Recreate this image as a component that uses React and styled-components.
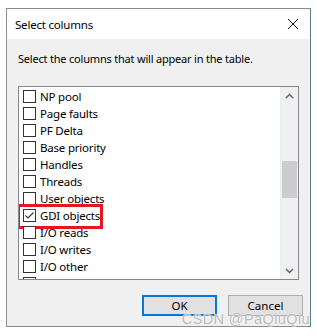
import React from "react";
import styled, { createGlobalStyle } from "styled-components";

const columns = [
  { label: "NP pool" },
  { label: "Page faults" },
  { label: "PF Delta" },
  { label: "Base priority" },
  { label: "Handles" },
  { label: "Threads" },
  { label: "User objects" },
  { label: "GDI objects", checked: true, marked: true },
  { label: "I/O reads" },
  { label: "I/O writes" },
  { label: "I/O other" },
  { label: "I/O read bytes" },
];

const App = () => {
  return (
    <Page>
      <GlobalStyle />
      <Window>
        <TitleBar>
          <Title>Select columns</Title>
          <CloseButton>
            <svg width="12" height="12" viewBox="0 0 12 12">
              <path d="M1 1L11 11M11 1L1 11" stroke="#111" strokeWidth="1" />
            </svg>
          </CloseButton>
        </TitleBar>
        <Body>
          <Prompt>Select the columns that will appear in the table.</Prompt>
          <ListBox>
            <Rows>
              {columns.map((c) => (
                <Row key={c.label} marked={c.marked}>
                  <Check>
                    {c.checked && (
                      <svg width="11" height="11" viewBox="0 0 11 11">
                        <path d="M1.5 5.5L4 8L9.5 2.5" stroke="#333" strokeWidth="1.1" fill="none" />
                      </svg>
                    )}
                  </Check>
                  <Label>{c.label}</Label>
                </Row>
              ))}
            </Rows>
            <ScrollBar>
              <Arrow>
                <svg width="9" height="6" viewBox="0 0 9 6">
                  <path d="M1 5L4.5 1.5L8 5" stroke="#606060" strokeWidth="1.4" fill="none" />
                </svg>
              </Arrow>
              <Track>
                <Thumb />
              </Track>
              <Arrow>
                <svg width="9" height="6" viewBox="0 0 9 6">
                  <path d="M1 1L4.5 4.5L8 1" stroke="#606060" strokeWidth="1.4" fill="none" />
                </svg>
              </Arrow>
            </ScrollBar>
          </ListBox>
          <Buttons>
            <Button primary>OK</Button>
            <Button>Cancel</Button>
          </Buttons>
        </Body>
        <Watermark>CSDN @PaQiuQiu</Watermark>
      </Window>
    </Page>
  );
};

export default App;

const GlobalStyle = createGlobalStyle`
  body {
    margin: 0;
    background: #ffffff;
    font-family: "Noto Sans", "Liberation Sans", sans-serif;
  }
`;

const Page = styled.div`
  width: 317px;
  height: 336px;
  padding: 8px 0 0 6px;
  box-sizing: border-box;
`;

const Window = styled.div`
  position: relative;
  width: 305px;
  height: 319px;
  border: 1px solid #8c8c8c;
  border-right-color: #5d7d86;
  box-sizing: border-box;
  background: #f0f0f0;
  display: flex;
  flex-direction: column;
`;

const TitleBar = styled.div`
  height: 30px;
  background: #ffffff;
  display: flex;
  align-items: center;
  justify-content: space-between;
  padding: 0 9px 0 8px;
`;

const Title = styled.div`
  font-size: 11.5px;
  letter-spacing: -0.2px;
  color: #000;
`;

const CloseButton = styled.div`
  width: 16px;
  height: 16px;
  display: flex;
  align-items: center;
  justify-content: center;
`;

const Body = styled.div`
  flex: 1;
  display: flex;
  flex-direction: column;
  padding: 11px 11px 0 11px;
`;

const Prompt = styled.div`
  font-size: 11px;
  letter-spacing: -0.2px;
  color: #000;
  height: 18px;
  line-height: 18px;
`;

const ListBox = styled.div`
  margin-top: 18px;
  height: 194px;
  border: 1px solid #828790;
  background: #ffffff;
  display: flex;
  box-sizing: border-box;
  overflow: hidden;
`;

const Rows = styled.div`
  flex: 1;
  padding: 1px 0 0 4px;
  overflow: hidden;
  border-right: 1px solid #e6eef8;
`;

const Row = styled.div`
  position: relative;
  height: 17px;
  display: flex;
  align-items: center;
  &::after {
    content: "";
    display: ${(p) => (p.marked ? "block" : "none")};
    position: absolute;
    left: -6px;
    top: -3px;
    width: 86px;
    height: 25px;
    border: 3px solid #e5161f;
    box-sizing: border-box;
  }
`;

const Check = styled.div`
  width: 13px;
  height: 13px;
  border: 1px solid #333333;
  box-sizing: border-box;
  background: #ffffff;
  display: flex;
  align-items: center;
  justify-content: center;
`;

const Label = styled.span`
  margin-left: 4px;
  font-size: 11.5px;
  letter-spacing: -0.2px;
  color: #000;
`;

const ScrollBar = styled.div`
  width: 17px;
  background: #f0f0f0;
  display: flex;
  flex-direction: column;
`;

const Arrow = styled.div`
  height: 17px;
  display: flex;
  align-items: center;
  justify-content: center;
`;

const Track = styled.div`
  flex: 1;
  padding-top: 57px;
`;

const Thumb = styled.div`
  margin: 0 1px;
  height: 37px;
  background: #cdcdcd;
`;

const Buttons = styled.div`
  display: flex;
  justify-content: flex-end;
  gap: 11px;
  margin-top: 15px;
  margin-right: -4px;
`;

const Button = styled.div`
  width: 75px;
  height: 21px;
  box-sizing: border-box;
  border: ${(p) => (p.primary ? "2px solid #0078d7" : "1px solid #adadad")};
  background: #e1e1e1;
  font-size: 11.5px;
  color: #000;
  display: flex;
  align-items: center;
  justify-content: center;
`;

const Watermark = styled.div`
  position: absolute;
  right: 0px;
  bottom: -1px;
  font-size: 14.5px;
  font-family: "Liberation Sans", sans-serif;
  color: rgba(175, 175, 175, 0.9);
  text-shadow: 0 0 1px #fff, 0 0 1px #fff;
  letter-spacing: 0.4px;
`;
